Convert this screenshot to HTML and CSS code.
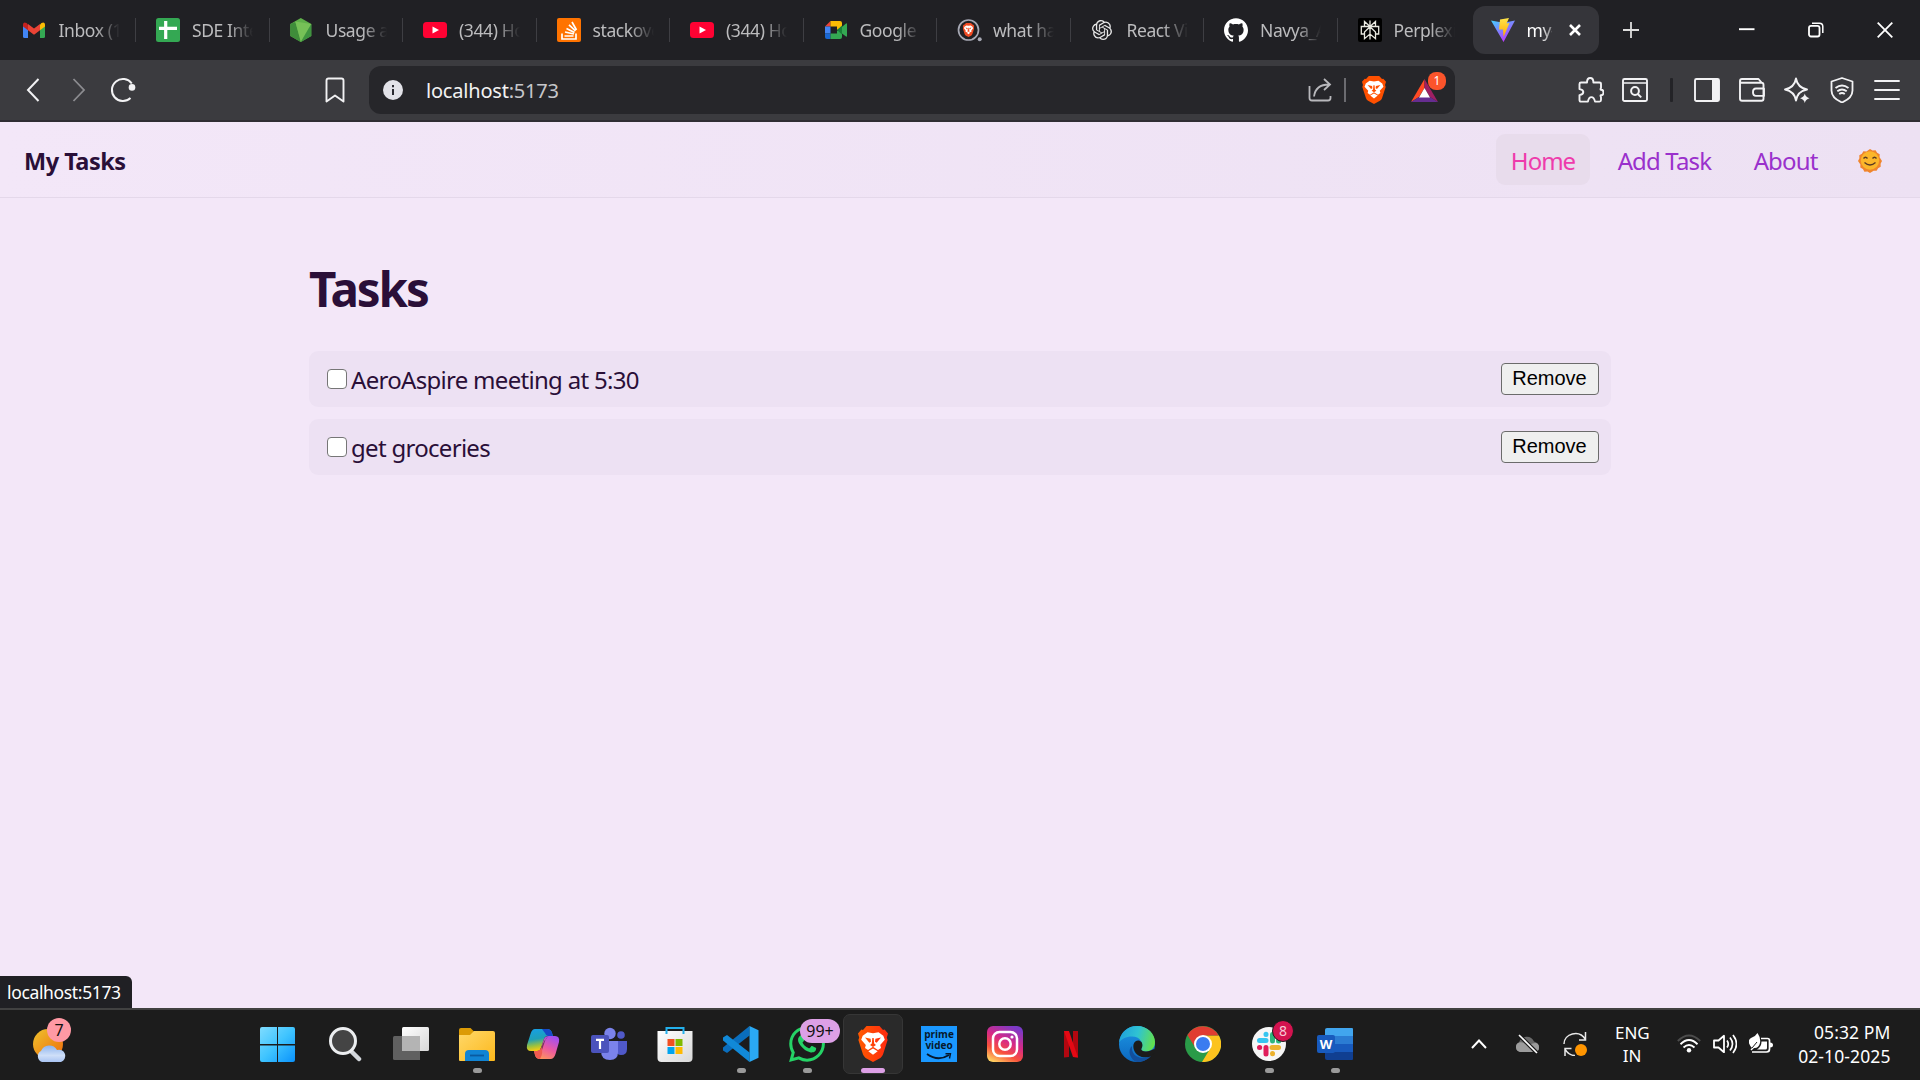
FILE: index.html
```html
<!DOCTYPE html>
<html lang="en">
<head>
<meta charset="utf-8">
<title>my tasks</title>
<link rel="stylesheet" href="styles.css">
</head>
<body>
<svg class="defs" width="0" height="0">
  <defs>
    <linearGradient id="g-brave" x1="0" x2="1"><stop offset="0" stop-color="#ff5a00"/><stop offset="1" stop-color="#ff2a10"/></linearGradient>
    <linearGradient id="g-vite" x1="0" y1="0" x2=".6" y2="1"><stop offset="0" stop-color="#41d1ff"/><stop offset="1" stop-color="#bd34fe"/></linearGradient>
    <linearGradient id="g-bolt" x1="0" y1="0" x2="0" y2="1"><stop offset="0" stop-color="#ffe54a"/><stop offset="1" stop-color="#ffa800"/></linearGradient>
    <linearGradient id="g-sun" x1="0" y1="0" x2="1" y2="1"><stop offset="0" stop-color="#eec22c"/><stop offset="1" stop-color="#ee6a0c"/></linearGradient>
    <linearGradient id="g-cloud" x1="0" y1="0" x2="0" y2="1"><stop offset="0" stop-color="#8db4ee"/><stop offset=".6" stop-color="#cfdff8"/><stop offset="1" stop-color="#a9c4f2"/></linearGradient>
    <linearGradient id="g-win" gradientUnits="userSpaceOnUse" x1="0" y1="0" x2="35" y2="35"><stop offset="0" stop-color="#7fdcff"/><stop offset=".5" stop-color="#3fc4ff"/><stop offset="1" stop-color="#0a92fb"/></linearGradient>
    <linearGradient id="g-white" x1="0" y1="0" x2="1" y2="1"><stop offset="0" stop-color="#fff"/><stop offset="1" stop-color="#d8d8d8"/></linearGradient>
    <linearGradient id="g-folder" x1="0" y1="0" x2="1" y2="1"><stop offset="0" stop-color="#ffd869"/><stop offset="1" stop-color="#fcb81c"/></linearGradient>
    <linearGradient id="g-cop1" x1="0" y1="0" x2=".2" y2="1"><stop offset="0" stop-color="#169fe8"/><stop offset=".5" stop-color="#1fa0b8"/><stop offset=".8" stop-color="#9fc23c"/><stop offset="1" stop-color="#f4cc12"/></linearGradient>
    <linearGradient id="g-cop2" x1=".7" y1="0" x2=".2" y2="1"><stop offset="0" stop-color="#a24ff0"/><stop offset=".5" stop-color="#ec5aa0"/><stop offset="1" stop-color="#ff9a55"/></linearGradient>
    <linearGradient id="g-ig" x1=".2" y1="1" x2=".7" y2="0"><stop offset="0" stop-color="#ffd060"/><stop offset=".3" stop-color="#f8503c"/><stop offset=".6" stop-color="#d82a86"/><stop offset="1" stop-color="#7b3ac8"/></linearGradient>
    <linearGradient id="g-edge" x1="0" y1=".3" x2="1" y2=".5"><stop offset="0" stop-color="#1fa0dc"/><stop offset=".5" stop-color="#2fc3d3"/><stop offset="1" stop-color="#63e04c"/></linearGradient>
    <linearGradient id="g-edge2" x1="0" y1="0" x2="0" y2="1"><stop offset="0" stop-color="#1d97e4"/><stop offset="1" stop-color="#0c68c0"/></linearGradient>
  </defs>
  <symbol id="lion" viewBox="0 0 30 36">
    <path d="M8.5 0h13l3.5 4 1.6-.4L30 7.5l-1.2 4 .8 2.5L25 28.5q-.8 2-2.6 3.4L15 36l-7.4-4.1Q5.800 30.500 5 28.500L.4 14l.8-2.500L0 7.500l3.400-3.900L5 4z"/>
    <path fill="#fff" d="M9.500 6.200 15 7.200l5.500-1 4.800 3.600 1.500 4-4.600 5.200.8 3-3 2L15 20.800l-5 3.200-3-2 .8-3-4.600-5.200 1.500-4z"/>
    <path fill="#fff" d="M10.300 25.200 15 22.400l4.700 2.800L15 28.800z"/>
    <path d="m7 11.600 5.600 1.200.4 3-1.700 1zM23 11.600l-5.600 1.200-.4 3 1.700 1zM14.300 12h1.400l.5 5.500 1.800 1.600-3 1.900-3-1.900 1.800-1.600z"/>
  </symbol>
  <symbol id="youtube" viewBox="0 0 24 24"><rect y="4" width="24" height="16" rx="3.500" fill="#ff0233"/><path d="m9.500 8.500 6.500 3.500-6.500 3.500z" fill="#fff"/></symbol>
</svg>

<div class="screen">
  <header class="tabstrip">
    <div class="tab"><svg width="24" height="24" viewBox="1 0 24 24"><path fill="#4285f4" d="M1 7v11.500Q1 20 2.500 20H6V10z"/><path fill="#34a853" d="M23 7v11.500q0 1.500-1.500 1.500H18V10z"/><path fill="#fbbc04" d="M18 6.500v5.700l5-3.700V6.300Q22.500 3.500 19.500 5z"/><path fill="#c5221f" d="M1 8.500V6.300Q1.500 3.500 4.500 5L6 6.500v5.700z"/><path fill="#ea4335" d="m6 6 6 4.500L18 6v6.200l-6 4.500-6-4.500z"/></svg><span>Inbox (1,204)</span></div>
    <div class="tab"><svg width="24" height="24"><rect width="24" height="24" rx="2.500" fill="#34a853"/><path d="M9.700 3v18M3 10.300h18" stroke="#fff" stroke-width="3.200"/></svg><span>SDE Intern</span></div>
    <div class="tab"><svg width="24" height="24" viewBox="1.200 0 24 24"><path fill="#5fb04a" d="m12 0 10.500 6v12L12 24 1.500 18V6z"/><path fill="#3f8d3a" d="m1.500 6 5-2 6 20-.5 0L1.500 18z"/><path fill="#76c157" d="m6.500 3.500 16 2.500L12 24z"/><path fill="#3f9440" d="m22.500 6v12L12 24z"/></svg><span>Usage and</span></div>
    <div class="tab"><svg width="24" height="24"><use href="#youtube"/></svg><span>(344) How</span></div>
    <div class="tab"><svg width="24" height="24"><rect width="24" height="24" rx="2" fill="#ff7300"/><path d="M5 15.500v5.500h14v-5.500M7.500 18h9M8 14l9 2M9.500 10.500l8 4M12 6.800l6.500 6M15 4l4.500 8" fill="none" stroke="#fff" stroke-width="1.700"/></svg><span>stackoverflow</span></div>
    <div class="tab"><svg width="24" height="24"><use href="#youtube"/></svg><span>(344) How</span></div>
    <div class="tab"><svg width="24" height="24"><path fill="#ea4335" d="M1 8.500 6.500 3v5.500z"/><path fill="#4285f4" d="M1 8.500h5.500v7H1z"/><path fill="#1967d2" d="M1 15.500h5.500V21H3q-2 0-2-2z"/><path fill="#fbbc04" d="M6.500 3H16q2 0 2 2v4l-5 3V8.500H6.500z"/><path fill="#34a853" d="M6.500 21H16q2 0 2-2v-3.500l4 3q1 .5 1-.7V6.200q0-1.200-1-.7L13 13v2.500H6.500z"/><path fill="#188038" d="m13 12 5-4.500v9z"/></svg><span>Google Meet</span></div>
    <div class="tab"><svg width="26" height="24" viewBox="0 0 26 24"><circle cx="11.500" cy="12" r="10" fill="none" stroke="#a6a8b4" stroke-width="1.700"/><svg x="5.500" y="5" width="12" height="14" viewBox="0 0 30 36" fill="#f04a22"><use href="#lion"/></svg><circle cx="22.700" cy="21.200" r="2" fill="#a6a8b4"/></svg><span>what happens</span></div>
    <div class="tab"><svg width="24" height="24" viewBox="-1.200 -2.400 28.800 28.800"><path fill="#e8e8e8" d="M22.2819 9.8211a5.9847 5.9847 0 0 0-.5157-4.9108 6.0462 6.0462 0 0 0-6.5098-2.9A6.0651 6.0651 0 0 0 4.9807 4.1818a5.9847 5.9847 0 0 0-3.9977 2.9 6.0462 6.0462 0 0 0 .7427 7.0966 5.98 5.98 0 0 0 .511 4.9107 6.051 6.051 0 0 0 6.5146 2.9001A5.9847 5.9847 0 0 0 13.2599 24a6.0557 6.0557 0 0 0 5.7718-4.2058 5.9894 5.9894 0 0 0 3.9977-2.9001 6.0557 6.0557 0 0 0-.7475-7.0729zm-9.022 12.6081a4.4755 4.4755 0 0 1-2.8764-1.0408l.1419-.0804 4.7783-2.7582a.7948.7948 0 0 0 .3927-.6813v-6.7369l2.02 1.1686a.071.071 0 0 1 .038.052v5.5826a4.504 4.504 0 0 1-4.4945 4.4944zm-9.6607-4.1254a4.4708 4.4708 0 0 1-.5346-3.0137l.142.0852 4.783 2.7582a.7712.7712 0 0 0 .7806 0l5.8428-3.3685v2.3324a.0804.0804 0 0 1-.0332.0615L9.74 19.9502a4.4992 4.4992 0 0 1-6.1408-1.6464zM2.3408 7.8956a4.485 4.485 0 0 1 2.3655-1.9728V11.6a.7664.7664 0 0 0 .3879.6765l5.8144 3.3543-2.0201 1.1685a.0757.0757 0 0 1-.071 0l-4.8303-2.7865A4.504 4.504 0 0 1 2.3408 7.872zm16.5963 3.8558L13.1038 8.364 15.1192 7.2a.0757.0757 0 0 1 .071 0l4.8303 2.7913a4.4944 4.4944 0 0 1-.6765 8.1042v-5.6772a.79.79 0 0 0-.407-.667zm2.0107-3.0231l-.142-.0852-4.7735-2.7818a.7759.7759 0 0 0-.7854 0L9.409 9.2297V6.8974a.0662.0662 0 0 1 .0284-.0615l4.8303-2.7866a4.4992 4.4992 0 0 1 6.6802 4.66zM8.3065 12.863l-2.02-1.1638a.0804.0804 0 0 1-.038-.0567V6.0742a4.4992 4.4992 0 0 1 7.3757-3.4537l-.142.0805L8.704 5.459a.7948.7948 0 0 0-.3927.6813zm1.0976-2.3654l2.602-1.4998 2.6069 1.4998v2.9994l-2.5974 1.4997-2.6067-1.4997Z"/></svg><span>React Vite</span></div>
    <div class="tab"><svg width="24" height="24"><path fill="#fff" d="M12 .297c-6.63 0-12 5.373-12 12 0 5.303 3.438 9.8 8.205 11.385.6.113.82-.258.82-.577 0-.285-.01-1.04-.015-2.04-3.338.724-4.042-1.61-4.042-1.61C4.422 18.07 3.633 17.7 3.633 17.7c-1.087-.744.084-.729.084-.729 1.205.084 1.838 1.236 1.838 1.236 1.07 1.835 2.809 1.305 3.495.998.108-.776.417-1.305.76-1.605-2.665-.3-5.466-1.332-5.466-5.93 0-1.31.465-2.38 1.235-3.22-.135-.303-.54-1.523.105-3.176 0 0 1.005-.322 3.3 1.23.96-.267 1.98-.399 3-.405 1.02.006 2.04.138 3 .405 2.28-1.552 3.285-1.23 3.285-1.23.645 1.653.24 2.873.12 3.176.765.84 1.23 1.91 1.23 3.22 0 4.61-2.805 5.625-5.475 5.92.42.36.81 1.096.81 2.22 0 1.606-.015 2.896-.015 3.286 0 .315.21.69.825.57C20.565 22.092 24 17.592 24 12.297c0-6.627-5.373-12-12-12"/></svg><span>Navya_Aero</span></div>
    <div class="tab last"><svg width="24" height="24"><rect width="24" height="24" rx="2" fill="#000"/><path d="M12 2.500v19M6.500 3.500 12 8.500l5.500-5v5h3.200v7.500h-3.200v4.700L12 16l-5.500 4.700V16H3.300V8.500h3.200zM6.500 8.500H17.500M12 8.700 6.500 14v2M12 8.700l5.500 5.300v2" fill="none" stroke="#e8e8e0" stroke-width="1.300"/></svg><span>Perplexity</span></div>
    <div class="tab active"><svg width="24" height="24"><path fill="url(#g-vite)" d="M0 2.500 11 4.500h3L24 2.500 12.500 24z"/><path fill="url(#g-bolt)" d="m9 1.500 9-1.500-2.500 5.500 3-.500L12.500 19l-.5-7.500H8z"/></svg><span>my-app</span><svg class="close" width="14" height="14"><path d="m2 2 10 10M12 2 2 12" stroke="#fff" stroke-width="2.600"/></svg></div>
    <svg class="newtab" width="16" height="16"><path d="M8 0v16M0 8h16" stroke="#ddd" stroke-width="1.800"/></svg>
    <div class="winctl">
      <svg width="16" height="16"><path d="M0 7.200h15.500" stroke="#fff" stroke-width="1.900"/></svg>
      <svg width="16" height="16"><rect x="1" y="3.800" width="10.500" height="10.700" rx="2" fill="none" stroke="#fff" stroke-width="1.800"/><path d="M4 1.200h7.500q3.300 0 3.300 3.300V11" fill="none" stroke="#fff" stroke-width="1.500"/></svg>
      <svg width="16" height="16"><path d="m.7.7 14.600 14.600M15.300.7.7 15.300" stroke="#fff" stroke-width="1.800"/></svg>
    </div>
  </header>

  <div class="toolbar">
    <div class="navbtns">
      <svg width="14" height="24"><path d="M12.500 1 2 12l10.500 11" fill="none" stroke="#f2f2f4" stroke-width="2"/></svg>
      <svg width="14" height="24"><path d="M1.500 1 12 12 1.500 23" fill="none" stroke="#8c8c90" stroke-width="1.800"/></svg>
      <svg width="28" height="26"><path d="M22.800 6.500A11 11 0 1 0 21.500 21" fill="none" stroke="#f2f2f4" stroke-width="2"/><circle cx="23" cy="10.400" r="3.300" fill="#f2f2f4"/></svg>
    </div>
    <svg class="bookmark" width="20" height="26"><path d="M1.500 24.500v-21q0-2 2-2h13q2 0 2 2v21L10 18.500z" fill="none" stroke="#f2f2f4" stroke-width="1.900" stroke-linejoin="round"/></svg>
    <div class="urlbar">
      <svg width="20" height="20"><circle cx="10" cy="10" r="10" fill="#e2e2e8"/><path d="M10 9v6M10 5v2.200" stroke="#2a2a30" stroke-width="2"/></svg>
      <div class="url">localhost<span>:5173</span></div>
      <svg class="share" width="24" height="24"><path d="M1.500 8v12q0 2.500 2.500 2.500h16q2.500 0 2.500-2.500v-2" fill="none" stroke="#b8b8bc" stroke-width="1.800"/><path d="M6 18.500C7 11 12 6.500 21 6.500M16 1l6 5.500-6 5.500" fill="none" stroke="#b8b8bc" stroke-width="1.800"/></svg>
      <i class="urlsep"></i>
      <svg class="shield" width="24" height="28" viewBox="0 0 30 36" preserveAspectRatio="none" fill="#ff5000"><use href="#lion"/></svg>
      <div class="bat"><svg width="27" height="23"><path fill="#ff4a24" d="M13.500 0v9L8 18l-8 5z"/><path fill="#9e1f63" d="M13.500 0 27 23l-8-5-5.500-9z"/><path fill="#662d91" d="M0 23h27l-8-5H8z"/><path fill="#fff" d="m13.500 9 5.500 9.500H8z"/></svg><b>1</b></div>
    </div>
    <div class="tools">
      <svg width="26" height="26"><path d="M1.500 7q0-1.500 1.500-1.500h6q0-4.500 3.200-4.500t3.200 4.500h6q1.600 0 1.600 1.500v4q-1 1.500 0 1.800 2.500 0 2.500 2.700t-2.500 2.600q-1 .4 0 2v3q0 1.500-1.500 1.500h-4.500q-1-4.500-3.600-4.500t-3.500 4.500H3q-1.500 0-1.500-1.500v-5q3.800-.5 3.800-3t-3.800-3z" fill="none" stroke="#f2f2f4" stroke-width="1.900" stroke-linejoin="round"/></svg>
      <svg width="26" height="26"><rect x="1" y="2" width="24" height="22" rx="1.500" fill="none" stroke="#f2f2f4" stroke-width="1.900"/><path d="M1 6h24" stroke="#f2f2f4" stroke-width="1.500"/><circle cx="13" cy="14" r="3.900" fill="none" stroke="#f2f2f4" stroke-width="2"/><path d="m15.800 17 3.400 3.400" stroke="#f2f2f4" stroke-width="2"/></svg>
      <i class="toolsep"></i>
      <svg width="26" height="26"><rect x="1" y="2" width="24" height="22" rx="1.500" fill="none" stroke="#f2f2f4" stroke-width="1.900"/><path d="M18 2h7v22h-7z" fill="#f2f2f4"/></svg>
      <svg width="26" height="26"><path d="M1 4q0-2 2-2h16.500l3 3.500M1 4q0 1.800 2 1.800h19.500q2 0 2 2v14q0 2-2 2H3q-2 0-2-2zM25 11.500h-8q-3 0-3 3.700t3 3.700h8z" fill="none" stroke="#f2f2f4" stroke-width="1.900" stroke-linejoin="round"/></svg>
      <svg width="26" height="26"><path d="M12 1.500q1.500 9 11 11-9.500 2-11 11-1.500-9-11-11 9.500-2 11-11z" fill="none" stroke="#f2f2f4" stroke-width="1.900" stroke-linejoin="round"/><circle cx="20.500" cy="21" r="6" fill="#3b3b3f"/><path d="M20.800 16.500q.8 3.700 4.700 4.700-3.900 1-4.700 4.800-.8-3.800-4.700-4.800 3.900-1 4.700-4.700z" fill="#f2f2f4"/></svg>
      <svg width="26" height="26"><path d="M13 1 23.500 4.500v9q0 7.500-10.500 12Q2.500 21 2.500 13.500v-9z" fill="none" stroke="#f2f2f4" stroke-width="1.800" stroke-linejoin="round"/><path d="M6.500 11q6.500-5 13 0M8.300 14.200q4.700-3.400 9.400 0M10.200 17q2.800-2 5.600 0" fill="none" stroke="#f2f2f4" stroke-width="1.900"/></svg>
      <svg width="26" height="26"><path d="M1 4h24M1 13h24M1 22h24" stroke="#f2f2f4" stroke-width="1.900" stroke-linecap="round"/></svg>
    </div>
  </div>

  <nav class="sitenav">
    <div class="brand">My Tasks</div>
    <div class="links">
      <a class="current">Home</a><a>Add Task</a><a>About</a>
      <svg class="sun" width="24" height="24"><path fill="#f0852c" d="M12 0l2.600 1.400 3-.1 1.500 2.500 2.600 1.500-.1 3L24 12l-1.400 2.700.1 3-2.600 1.500-1.500 2.600-3-.1L12 24l-2.600-1.400-3 .1-1.500-2.600-2.600-1.500.1-3L0 12l1.400-2.700-.1-3 2.600-1.500 1.500-2.500 3 .1z"/><circle cx="12" cy="11.500" r="9.200" fill="#fbb62a"/><path d="M5.500 9.500q2-2.500 4 0M14.500 9.500q2-2.500 4 0M6.500 13.500q5.500 4.800 11 0" fill="none" stroke="#5b3a22" stroke-width="1.400"/></svg>
    </div>
  </nav>

  <main class="page">
    <h1>Tasks</h1>
    <ul>
      <li><label><input type="checkbox"><span>AeroAspire meeting at 5:30</span></label><button>Remove</button></li>
      <li><label><input type="checkbox"><span>get groceries</span></label><button>Remove</button></li>
    </ul>
    <div class="status">localhost:5173</div>
  </main>

  <footer class="taskbar">
    <div class="weather"><svg width="34" height="36"><circle cx="15" cy="16" r="15" fill="url(#g-sun)"/><path fill="url(#g-cloud)" d="M9 34a6 6 0 0 1-1-11 9 9 0 0 1 16-1 6.200 6.200 0 0 1 4 12z"/></svg><b>7</b></div>
    <div class="apps">
      <div class="app start"><svg width="35" height="35" fill="url(#g-win)"><path d="M0 2q0-2 2-2h15v17H0zM18 0h15q2 0 2 2v15H18zM0 18.500h17V35H2q-2 0-2-2zM18 18.500h17V33q0 2-2 2H18z"/></svg></div>
      <div class="app"><svg width="36" height="36"><path d="m24.500 25.500 7.500 7.500" stroke="#d3d7dc" stroke-width="4.500" stroke-linecap="round"/><circle cx="16" cy="15" r="12.500" fill="#444" stroke="#eceef0" stroke-width="3"/></svg></div>
      <div class="app"><svg width="36" height="36"><rect x="9" y="1" width="27" height="24" rx="1.500" fill="url(#g-white)"/><path fill="#606060" d="M1.500 10H27v24H1.500Q0 34 0 32.500v-21Q0 10 1.500 10z"/><path fill="#b4b4b4" d="M9 10h18v15H9z"/></svg></div>
      <div class="app run"><svg width="36" height="36"><path fill="#dc9b06" d="M0 4q0-2 2-2h9.500l4 4v6H0z"/><path fill="url(#g-folder)" d="M0 9h11l4-4h19q2 0 2 2v27q0 1-1 1H1q-1 0-1-1z"/><path fill="#1184d4" d="M6 35v-7q0-4 4-4h16q4 0 4 4v7z"/><path d="M11 29.500h14" stroke="#0a5aa0" stroke-width="1.800"/></svg></div>
      <div class="app"><svg width="36" height="36"><path fill="url(#g-cop1)" d="M10 3h12q4 0 5 4l1 3h-5q-3 0-4 3l-3 9q-1 3-4 3H6q-5 0-4-6l3.500-11Q7 3 10 3z"/><path fill="#1648c8" d="M17 3h5q4 0 5 4l1 3h-5q-2 0-3-3z"/><path fill="url(#g-cop2)" d="M24 10h6q5 0 4 6l-3.500 12q-1.500 5-5 5H15q-4 0-5-4l-1-4h3q3 0 4-3l3-9q1-3 5-3z"/><path fill="#1c1c1c" d="M19.500 14.500 23 11q-2 .5-3 4l-3 9q-1 3-3.500 3z" fill-opacity=".55"/><path fill="#f05a50" d="M9 25h3q3 0 4-3l.5-1q2 6-1.500 12-4 0-5-4z"/></svg></div>
      <div class="app"><svg width="36" height="36"><circle cx="19" cy="7.500" r="5.700" fill="#7b83eb"/><circle cx="30" cy="9" r="3.800" fill="#5059c9"/><path fill="#5059c9" d="M24 15h12v8q0 6-6 6-4 0-6-4z"/><path fill="#7b83eb" d="M10 15h17v11q0 8-8 8-9 0-9-9z"/><rect y="9" width="18" height="18" rx="2" fill="#4b53bc"/><path d="M5 13.800h8M9 13.800V23" stroke="#fff" stroke-width="2.200"/></svg></div>
      <div class="app"><svg width="36" height="36"><path fill="url(#g-white)" d="M.5 5h35v27q0 4-4 4h-27q-4 0-4-4z"/><path d="M9.500 8V2h17v6" fill="none" stroke="#23b0ec" stroke-width="2"/><path fill="#f25022" d="M10.500 13h7v7h-7z"/><path fill="#7fba00" d="M18.500 13h7v7h-7z"/><path fill="#00a4ef" d="M10.500 21h7v7h-7z"/><path fill="#ffb900" d="M18.500 21h7v7h-7z"/></svg></div>
      <div class="app run"><svg width="36" height="36"><path fill="#0a6ebd" d="M26.500 0v9.500L4 27 0 24.500v-3z"/><path fill="#1189d8" d="M26.500 36v-9.500L4 9 0 11.500v3z"/><path fill="#2aa9f4" d="m26.500 0 9 4.300v27.400l-9 4.300z"/></svg></div>
      <div class="app run"><svg width="36" height="36" viewBox="0 0 24 24"><path fill="#25d366" d="M17.472 14.382c-.297-.149-1.758-.867-2.03-.967-.273-.099-.471-.148-.67.15-.197.297-.767.966-.94 1.164-.173.199-.347.223-.644.075-.297-.15-1.255-.463-2.39-1.475-.883-.788-1.48-1.761-1.653-2.059-.173-.297-.018-.458.13-.606.134-.133.298-.347.446-.52.149-.174.198-.298.298-.497.099-.198.05-.371-.025-.52-.075-.149-.669-1.612-.916-2.207-.242-.579-.487-.5-.669-.51-.173-.008-.371-.01-.57-.01-.198 0-.52.074-.792.372-.272.297-1.04 1.016-1.04 2.479 0 1.462 1.065 2.875 1.213 3.074.149.198 2.096 3.2 5.077 4.487.709.306 1.262.489 1.694.625.712.227 1.36.195 1.871.118.571-.085 1.758-.719 2.006-1.413.248-.694.248-1.289.173-1.413-.074-.124-.272-.198-.57-.347m-5.421 7.403h-.004a9.87 9.87 0 01-5.031-1.378l-.361-.214-3.741.982.998-3.648-.235-.374a9.86 9.86 0 01-1.51-5.26c.001-5.45 4.436-9.884 9.888-9.884 2.64 0 5.122 1.03 6.988 2.898a9.825 9.825 0 012.893 6.994c-.003 5.45-4.437 9.884-9.885 9.884m8.413-18.297A11.815 11.815 0 0012.05 0C5.495 0 .16 5.335.157 11.892c0 2.096.547 4.142 1.588 5.945L.057 24l6.305-1.654a11.882 11.882 0 005.683 1.448h.005c6.554 0 11.89-5.335 11.893-11.893a11.821 11.821 0 00-3.48-8.413z"/></svg><b class="count">99+</b></div>
      <div class="app focus"><svg width="30" height="36" fill="url(#g-brave)"><use href="#lion"/></svg></div>
      <div class="app"><div class="prime"><span>prime</span><span>video</span><svg width="26" height="7"><path d="M1 1q11 8 22 1" fill="none" stroke="#06182c" stroke-width="1.800"/><path d="M19.500.8 24.500.5l-1 5" fill="none" stroke="#06182c" stroke-width="1.400"/></svg></div></div>
      <div class="app"><svg width="36" height="36"><rect width="36" height="36" rx="6" fill="url(#g-ig)"/><rect x="6" y="6" width="24" height="24" rx="6.500" fill="none" stroke="#fff" stroke-width="2.500"/><circle cx="18" cy="18" r="5.700" fill="none" stroke="#fff" stroke-width="2.500"/><circle cx="25" cy="11" r="1.600" fill="#fff"/></svg></div>
      <div class="app"><svg width="36" height="36"><path fill="#b20710" d="M11 5h5v26l-5 .5zM20 5h5v26.500l-5-.5z"/><path fill="#e50914" d="M11 5h5l9 26.500-5-.5z"/></svg></div>
      <div class="app"><svg width="36" height="36"><circle cx="18" cy="18" r="18" fill="url(#g-edge2)"/><path fill="url(#g-edge)" d="M0 17C1 6 9 0 18 0c11 0 18 8 18 16 0 6-4 9.500-9 9.500-4 0-5.500-1.500-4.500-3C25 17 21 10.500 13 10.500 7 10.500 2 13 0 17z"/><path fill="#124f9c" d="M13 20c-1 7 4 12 11 12 3 0 6-1 8.500-2.500C29 34 23 36 18 36 11 34 8 24 13 20z"/><path fill="#1c1c1c" d="M14.500 18.500c1-4 5.500-5.500 8-2.500 1.500 2.500 1 5 0 6.500-.8 1.500.5 3 4.500 3 3 0 5-1 8-2.500l1.500 3-3.500 4c-7 3-15.500 1-18-6q-1-2.500-.5-5.500z"/></svg></div>
      <div class="app"><svg width="36" height="36"><circle cx="18" cy="18" r="18" fill="#2a9b48"/><path fill="#fcc31e" d="M18 9.500h15.900A18 18 0 0 1 17 36l8.400-13.800z"/><path fill="#e03c31" d="M2.400 9A18 18 0 0 1 33.600 9.500H18L10.500 22z"/><circle cx="18" cy="18" r="9" fill="#fff"/><circle cx="18" cy="18" r="7" fill="#3a7cf0"/></svg></div>
      <div class="app run"><svg width="36" height="36"><circle cx="18" cy="18" r="17" fill="#f6f6f6"/><g stroke-width="5" stroke-linecap="round"><path d="M8.500 14.500H15M15 8.300v.2" stroke="#36c5f0"/><path d="M21.500 15V8.500M27.500 15h.2" stroke="#2eb67d"/><path d="M21 21.500h6.500M21.500 27.500v.2" stroke="#ecb22e"/><path d="M15 21.500V28M8.500 21.500h.2" stroke="#e01e5a"/></g></svg><b class="eight">8</b></div>
      <div class="app run"><svg width="36" height="36"><path fill="#41a5ee" d="M8 4q0-2 2-2h25q1 0 1 1v7H8z"/><path fill="#2b7cd3" d="M8 10h28v8H8z"/><path fill="#185abd" d="M8 18h28v8H8z"/><path fill="#103f91" d="M8 26h28v7q0 1-1 1H10q-2 0-2-2z"/></svg><em>W</em></div>
    </div>
    <div class="tray">
      <svg width="16" height="10"><path d="m1 9 7-7.500L15 9" fill="none" stroke="#fff" stroke-width="2"/></svg>
      <svg class="t-cloud" width="24" height="24"><path fill="#6a6a6a" d="M5 20a5 5 0 0 1-1-9.500 8 8 0 0 1 15-1q5 1.500 5 6 0 4.500-5 4.500z"/><path fill="#9c9c9c" d="M5 20a5 5 0 0 1-1-9.500q4-1 7 2l8 7.500zM14 13q10-5 10 2.500 0 4.500-5 4.500z"/><path d="m4 3 18 18" stroke="#1c1c1c" stroke-width="4"/><path d="m4 3 18 18" stroke="#fff" stroke-width="1.600"/></svg>
      <svg class="t-sync" width="24" height="24"><path d="M1 12C1 2 16-3 22.500 7.500M22.500 0v8h-6.500M12 23.500Q5.500 23.500 2 17M2 24v-7.500h6.500" fill="none" stroke="#e8e8e8" stroke-width="1.500"/><circle cx="18" cy="18" r="6" fill="#ff9500"/></svg>
      <div class="lang">ENG<br>IN</div>
      <svg class="t-wifi" width="24" height="20"><path d="M.8 7Q12-4 23.200 7" fill="none" stroke="#4c4c4c" stroke-width="1.900"/><path d="M3.500 10.200Q12 2 20.500 10.200M6.500 13.500Q12 8.500 17.500 13.500" fill="none" stroke="#fff" stroke-width="1.900"/><circle cx="12" cy="16.200" r="2.200" fill="#fff"/></svg>
      <svg class="t-vol" width="24" height="20"><path d="M1 6.500h4.500L11 1.800v16.400l-5.500-4.700H1z" fill="none" stroke="#fff" stroke-width="1.800" stroke-linejoin="round"/><path d="M14 6.500q2.500 3.500 0 7M17 3.500q5 6.500 0 13M20 1q7 9 0 18" fill="none" stroke="#fff" stroke-width="1.700"/></svg>
      <svg class="t-bat" width="24" height="22"><path d="M12 5.500h6.500q2 0 2 2V16q0 3-3 3H3" fill="none" stroke="#fff" stroke-width="1.700"/><path fill="#fff" d="M12.500 8.500H18V15q0 1.500-1.500 1.500H8q4.500-2.500 4.500-8zM21 9.500q3 0 3 2.500t-3 2.500zM8.500 0Q12 5 11 10q-1.500 5.500-6 5l-2.500 2.500L1.500 16.500 3 15Q-3 8 2 5 6.500 3.500 8.500 0z"/><path d="m3 15 5-6" stroke="#1c1c1c" stroke-width="1"/></svg>
      <div class="clock">05:32 PM<br>02-10-2025</div>
    </div>
  </footer>
</div>
</body>
</html>
```
FILE: styles.css
```css
* { box-sizing: border-box; }
body { margin: 0; font-family: "Noto Sans", "Open Sans", sans-serif; }
svg { display: block; flex: none; }
.defs { position: absolute; }
.screen { width: 1920px; height: 1080px; display: flex; flex-direction: column; overflow: hidden; }

/* browser tabs */
.tabstrip { height: 60px; flex: none; background: #202024; display: flex; align-items: center; padding-left: 2.5px; }
.tab { width: 133.5px; height: 24px; display: flex; align-items: center; gap: 12px; padding-left: 20px; border-right: 1.500px solid #3e3e43; flex: none; }
.tab.last { border-right-color: transparent; }
.tab span { width: 61px; overflow: hidden; white-space: nowrap; font-size: 17.500px; line-height: 26px; letter-spacing: -.4px; color: #bcbcbe; -webkit-mask-image: linear-gradient(90deg, #000 60%, transparent 100%); mask-image: linear-gradient(90deg, #000 60%, transparent 100%); }
.tab svg[width="26"] { margin-right: -2px; }
.tab.active { width: 125.500px; height: 48px; border: 0; border-radius: 12px; background: #35353a; margin-left: 2px; padding-left: 17.500px; }
.tab.active span { width: 25px; color: #fff; -webkit-mask-image: linear-gradient(90deg, #000 50%, #0006 100%); mask-image: linear-gradient(90deg, #000 50%, #0006 100%); }
.tab.active .close { margin-left: 4px; }
.newtab { margin-left: 24px; }
.winctl { display: flex; gap: 53px; margin-left: auto; margin-right: 27px; }

/* browser toolbar */
.toolbar { height: 62px; flex: none; display: flex; align-items: center; background: #3b3b3f; border-bottom: 2px solid #2f2d33; }
.navbtns { display: flex; align-items: center; gap: 31.500px; padding-left: 26px; width: 325px; }
.navbtns svg:last-child { margin-left: -8px; }
.bookmark { margin-right: 24px; }
.urlbar { width: 1086px; height: 48px; border-radius: 12px; background: #26262a; display: flex; align-items: center; padding-left: 14px; }
.url { margin-left: 23px; width: 883px; margin-right: -1px; padding-top: 1px; font-size: 20px; line-height: 28px; color: #f2f2f2; letter-spacing: -.2px; }
.url span { color: #c6c6ca; }
.urlsep { width: 2px; height: 24px; background: #6b6b70; margin: 0 16px 0 12px; }
.bat { position: relative; margin-left: 25px; }
.bat b { position: absolute; left: 17px; top: -7px; width: 18px; height: 18px; border-radius: 8px; background: #fb542b; color: #fff; font: 400 12px/18px "Noto Sans", sans-serif; text-align: center; }
.tools { display: flex; align-items: center; margin-left: 122.500px; }
.tools svg { margin-right: 19px; }
.tools svg:first-child { margin-right: 18.500px; }
.tools svg:nth-child(2) { margin-right: 22px; }
.toolsep { width: 3px; height: 24px; background: #232327; border-radius: 1px; margin-right: 20.500px; }

/* site navigation */
.sitenav { height: 76px; flex: none; display: flex; align-items: center; justify-content: space-between; padding: 0 38px 1px 24px; border-bottom: 1px solid #e4d8ea; background: linear-gradient(90deg, #f3e7f8, #ede1f3); color: #2a0f38; }
.brand { padding-top: 3px; font-size: 23.500px; font-weight: 700; letter-spacing: -.5px; }
.links { display: flex; align-items: center; gap: 12.500px; }
.links a { height: 51px; line-height: 54px; padding: 0 15px; border-radius: 9px; font-size: 24px; letter-spacing: -.85px; color: #9a30cc; }
.links a.current { background: #e8dcec; color: #ee3bab; letter-spacing: -1px; }
.sun { margin: 3px 0 0 13px; }

/* task list */
.page { flex: 1; position: relative; background: #f3e7f8; padding: 58px 309px 0; color: #2a0f38; }
h1 { margin: 0; font-size: 47.500px; line-height: 66px; font-weight: 700; letter-spacing: -2.100px; }
ul { list-style: none; margin: 29px 0 0; padding: 0; display: flex; flex-direction: column; gap: 12px; }
li { height: 56px; display: flex; align-items: center; justify-content: space-between; padding: 0 12px 0 18px; border-radius: 9px; background: #ede1f3; }
label { display: flex; align-items: center; gap: 4px; font-size: 24px; letter-spacing: -.7px; }
input { appearance: none; width: 20px; height: 20px; margin: 0; border: 1.500px solid #767676; border-radius: 4px; background: #fff; }
button { width: 98px; height: 32px; padding: 0 1px 1px 0; border: 1px solid #6b6b6b; border-radius: 4px; background: #efefef; font: 20px "Liberation Sans", Arial, sans-serif; color: #000; }
.status { position: absolute; left: 0; bottom: 0; width: 132px; height: 32px; padding-left: 7px; border-radius: 0 6px 0 0; background: #202024; color: #fff; font-size: 17.500px; line-height: 33px; letter-spacing: -.35px; }

/* taskbar */
.taskbar { height: 72px; flex: none; display: flex; background: #1c1c1c; border-top: 2px solid #414141; }
.weather { position: relative; width: 243px; padding: 18px 0 0 33px; }
.weather b { position: absolute; left: 47px; top: 8px; width: 24px; height: 24px; border-radius: 12px; background: #ff99a4; color: #111; font: 400 16px/25px "Noto Sans", sans-serif; text-align: center; }
.apps { display: flex; width: 1228px; }
.app { position: relative; width: 66px; height: 68px; display: flex; align-items: center; justify-content: center; }
.app.start { width: 69px; }
.app.run::after { content: ""; position: absolute; left: 29px; bottom: 5px; width: 9px; height: 5px; border-radius: 3px; background: #9a9a9a; }
.app.focus { width: 60px; height: 60px; margin: 4px 3px 0; border: 1px solid #363636; border-radius: 7px; background: #2a2a2a; }
.app.focus::after { content: ""; position: absolute; left: 17px; bottom: 0; width: 24px; height: 5px; border-radius: 3px; background: #dda0e6; }
.count { position: absolute; left: 26px; top: 9px; width: 40px; height: 24px; border-radius: 12px; background: #dda0e6; color: #111; font: 400 16px/24px "Noto Sans", sans-serif; text-align: center; }
.eight { position: absolute; left: 36px; top: 10px; width: 22px; height: 22px; border-radius: 11px; border: 1px solid #1c1c1c; background: #d3134f; color: #f7c9d6; font: 400 14px/20px "Noto Sans", sans-serif; text-align: center; }
.app em { position: absolute; left: 15px; top: 25px; width: 18px; height: 18px; border-radius: 2px; background: #185abd; color: #fff; font: 700 13px/18px "Open Sans", sans-serif; text-align: center; }
.prime { width: 36px; height: 36px; background: #1a98ff; display: flex; flex-direction: column; align-items: center; padding-top: 3px; color: #06182c; }
.prime span { font: 700 10px/11px "Open Sans", sans-serif; letter-spacing: 0; }
.prime svg { margin-top: 2px; }
.tray { display: flex; align-items: center; flex: 1; height: 68px; color: #fff; font-size: 17px; line-height: 23px; }
.t-cloud { margin-left: 28px; }
.t-sync { margin-left: 24px; }
.lang { margin-left: 28px; width: 34px; text-align: center; letter-spacing: 0; }
.t-wifi { margin-left: 28px; }
.t-vol, .t-bat { margin-left: 12px; }
.clock { flex: 1; padding-right: 29.500px; text-align: right; font-size: 17.500px; line-height: 24px; letter-spacing: .1px; }
```
